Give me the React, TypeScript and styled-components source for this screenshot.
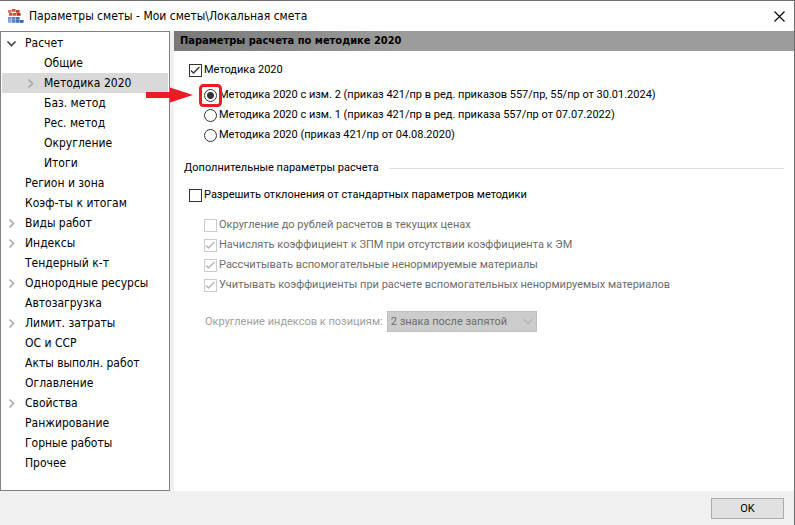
import React from "react";
import styled, { createGlobalStyle, css } from "styled-components";

const Global = createGlobalStyle`
  * { box-sizing: border-box; }
  body { margin: 0; background: #f0f0f0; }
  button, select, input { font: inherit; margin: 0; }
`;

const Dialog = styled.div`
  min-height: 100vh;
  display: flex;
  flex-direction: column;
  border-top: 1px solid #6d6d6d;
  border-right: 1px solid #6d6d6d;
  background: #f0f0f0;
  color: #000;
  font: 11px/20px Roboto, sans-serif;
  white-space: nowrap;
`;

const TitleBar = styled.header`
  display: flex;
  align-items: center;
  gap: 5px;
  height: 30px;
  padding-left: 8px;
  background: #fff;
`;

const Title = styled.h1`
  flex: 1;
  margin: 0;
  font: 12px/20px "DejaVu Sans Condensed", "DejaVu Sans", sans-serif;
`;

const CloseButton = styled.button`
  display: grid;
  place-items: center;
  width: 30px;
  height: 28px;
  padding: 0;
  border: 0;
  background: none;
`;

const Body = styled.div`
  flex: 1;
  display: flex;
  gap: 4px;
`;

const Sidebar = styled.nav`
  flex: none;
  width: 170px;
  padding: 1px;
  border: 1px solid #828282;
  background: #fff;
  font: 12px/20px "DejaVu Sans Condensed", "DejaVu Sans", sans-serif;
`;

const Tree = styled.ul`
  margin: 0;
  padding: 0;
  list-style: none;
`;

const TreeRow = styled.button<{ $level: number; $selected?: boolean }>`
  display: flex;
  align-items: center;
  width: 100%;
  height: 20px;
  padding: 0 0 0 ${(p) => (p.$level ? 23 : 4)}px;
  border: 0;
  background: ${(p) => (p.$selected ? "#d9d9d9" : "none")};
  color: inherit;
  text-align: left;
`;

const Marker = styled.span`
  display: flex;
  flex: none;
  width: 19px;
`;

const Panel = styled.main`
  flex: 1;
  min-width: 0;
  background: #fff;
`;

const PanelTitle = styled.h2`
  margin: 0;
  padding-left: 6px;
  background: linear-gradient(to right, #787878, #9c9c9c 36%);
  font: bold 11px/20px "DejaVu Sans Condensed", "DejaVu Sans", sans-serif;
`;

const Settings = styled.div`
  padding: 9px 10px 0;
`;

const Options = styled.div<{ $spaced?: boolean }>`
  padding: ${(p) => (p.$spaced ? "10px" : "5px")} 0 0 15px;
`;

const Group = styled.div<{ $offset?: boolean }>`
  padding: ${(p) => (p.$offset ? "7px" : "0")} 0 0 5px;
`;

const Option = styled.label<{ $disabled?: boolean }>`
  display: flex;
  align-items: center;
  gap: 2px;
  height: 20px;
  color: ${(p) => (p.$disabled ? "#6d6d6d" : "#000")};
`;

const mark = css`
  flex: none;
  appearance: none;
  width: 13px;
  height: 13px;
  border: 1px solid #333;
  background: #fff;
  &:disabled { border-color: #ccc; }
`;

const CheckInput = styled.input.attrs({ type: "checkbox" })`
  ${mark}
  grid-area: 1 / 1;
  & + svg { visibility: hidden; }
  &:checked + svg { visibility: visible; }
`;

const CheckBox = styled.span<{ $disabled?: boolean }>`
  display: grid;
  place-items: center;
  color: ${(p) => (p.$disabled ? "#b4b4b4" : "#333")};
  svg { grid-area: 1 / 1; pointer-events: none; }
`;

const RadioInput = styled.input.attrs({ type: "radio" })`
  ${mark}
  border-radius: 50%;
  &:checked { background: radial-gradient(circle, #333 3px, #fff 4px); }
`;

const RadioSlot = styled.span`
  position: relative;
  display: flex;
`;

const Callout = styled.svg`
  position: absolute;
  top: -6px;
  left: -59px;
  pointer-events: none;
`;

const Section = styled.div`
  display: flex;
  align-items: center;
  gap: 10px;
  margin-top: 13px;
  &::after {
    content: "";
    flex: 1;
    height: 1px;
    background: #dcdfe3;
  }
`;

const SelectRow = styled.div`
  display: flex;
  align-items: center;
  gap: 4px;
  margin-top: 16px;
  padding-left: 1px;
  color: #a0a0a0;
`;

const SelectBox = styled.span`
  display: grid;
  align-items: center;
  width: 150px;
  svg { grid-area: 1 / 1; justify-self: end; margin-right: 4px; pointer-events: none; }
`;

const Select = styled.select`
  grid-area: 1 / 1;
  appearance: none;
  height: 21px;
  padding: 0 20px 0 3px;
  border: 1px solid #bfbfbf;
  border-radius: 0;
  background: #ccc;
  color: #6d6d6d;
  &:disabled { opacity: 1; }
`;

const Footer = styled.footer`
  display: flex;
  justify-content: flex-end;
  padding: 7px 10px 6px;
`;

const OkButton = styled.button`
  width: 73px;
  height: 21px;
  padding: 0;
  border: 1px solid #adadad;
  background: #e1e1e1;
  color: #000;
`;

type Item = { label: string; level?: number; state?: "open" | "closed"; selected?: boolean };

const items: Item[] = [
  { label: "Расчет", state: "open" },
  { label: "Общие", level: 1 },
  { label: "Методика 2020", level: 1, state: "closed", selected: true },
  { label: "Баз. метод", level: 1 },
  { label: "Рес. метод", level: 1 },
  { label: "Округление", level: 1 },
  { label: "Итоги", level: 1 },
  { label: "Регион и зона" },
  { label: "Коэф-ты к итогам" },
  { label: "Виды работ", state: "closed" },
  { label: "Индексы", state: "closed" },
  { label: "Тендерный к-т" },
  { label: "Однородные ресурсы", state: "closed" },
  { label: "Автозагрузка" },
  { label: "Лимит. затраты", state: "closed" },
  { label: "ОС и ССР" },
  { label: "Акты выполн. работ" },
  { label: "Оглавление" },
  { label: "Свойства", state: "closed" },
  { label: "Ранжирование" },
  { label: "Горные работы" },
  { label: "Прочее" },
];

const methods = [
  "Методика 2020 с изм. 2 (приказ 421/пр в ред. приказов 557/пр, 55/пр от 30.01.2024)",
  "Методика 2020 с изм. 1 (приказ 421/пр в ред. приказа 557/пр от 07.07.2022)",
  "Методика 2020 (приказ 421/пр от 04.08.2020)",
];

const extras = [
  { label: "Округление до рублей расчетов в текущих ценах", checked: false },
  { label: "Начислять коэффициент к ЗПМ при отсутствии коэффициента к ЭМ", checked: true },
  { label: "Рассчитывать вспомогательные ненормируемые материалы", checked: true },
  { label: "Учитывать коэффициенты при расчете вспомогательных ненормируемых материалов", checked: true },
];

const Chevron = ({ open }: { open: boolean }) => (
  <svg width="11" height="11" viewBox="0 0 11 11" fill="none" strokeWidth="1.6" stroke={open ? "#404040" : "#a6a6a6"} aria-hidden="true">
    <path d={open ? "M1.5 3.5 5.5 7.5 9.5 3.5" : "M3.5 1.5 7.5 5.5 3.5 9.5"} />
  </svg>
);

const cells: [number, number, string][] = [
  [4, 0, "#d9523c"], [0, 1, "#e0705c"], [8, 1, "#c8402c"],
  [1, 4, "#d9523c"], [5, 4, "#d9523c"], [9, 4, "#b83222"],
  [0, 8, "#7394cf"], [4, 8, "#5c80c4"], [8, 8, "#486fb8"],
  [0, 11, "#84a3d8"], [4, 11, "#5c80c4"], [8, 11, "#486fb8"], [12, 11, "#3a60aa"],
];

const AppIcon = () => (
  <svg width="16" height="14" viewBox="0 0 16 14" aria-hidden="true">
    {cells.map(([x, y, fill]) => <rect key={`${x}-${y}`} x={x} y={y} width="3.6" height="2.800" fill={fill} />)}
  </svg>
);

function Check({ label, checked, disabled }: { label: string; checked: boolean; disabled?: boolean }) {
  return (
    <Option $disabled={disabled}>
      <CheckBox $disabled={disabled}>
        <CheckInput defaultChecked={checked} disabled={disabled} />
        <svg width="13" height="13" viewBox="0 0 13 13" fill="none" stroke="currentColor" strokeWidth="1.3" aria-hidden="true">
          <path d="M2 6.5 4.500 9 10.5 3" />
        </svg>
      </CheckBox>
      {label}
    </Option>
  );
}

const ArrowCallout = () => (
  <Callout width="78" height="25" viewBox="0 0 78 25" aria-hidden="true">
    <path d="M1 9H25V4.500L48 12 25 19.500V15H1Z" fill="#ed1c24" />
    <rect x="55.500" y="2.500" width="20" height="20" rx="3" fill="none" stroke="#ed1c24" strokeWidth="3" />
  </Callout>
);

export default function App() {
  return (
    <>
      <Global />
      <Dialog role="dialog" aria-labelledby="title">
        <TitleBar>
          <AppIcon />
          <Title id="title">Параметры сметы - Мои сметы\Локальная смета</Title>
          <CloseButton aria-label="Закрыть">
            <svg width="11" height="11" viewBox="0 0 11 11" stroke="#000" strokeWidth="1.1" aria-hidden="true">
              <path d="M.5.5l10 10M10.500.5l-10 10" />
            </svg>
          </CloseButton>
        </TitleBar>
        <Body>
          <Sidebar>
            <Tree>
              {items.map((item) => (
                <li key={item.label}>
                  <TreeRow $level={item.level ?? 0} $selected={item.selected}>
                    <Marker>{item.state && <Chevron open={item.state === "open"} />}</Marker>
                    {item.label}
                  </TreeRow>
                </li>
              ))}
            </Tree>
          </Sidebar>
          <Panel>
            <PanelTitle>Параметры расчета по методике 2020</PanelTitle>
            <Settings>
              <Group>
                <Check label="Методика 2020" checked />
                <Options>
                  {methods.map((label, i) => (
                    <Option key={label}>
                      <RadioSlot>
                        <RadioInput name="method" defaultChecked={i === 0} />
                        {i === 0 && <ArrowCallout />}
                      </RadioSlot>
                      {label}
                    </Option>
                  ))}
                </Options>
              </Group>
              <Section>Дополнительные параметры расчета</Section>
              <Group $offset>
                <Check label="Разрешить отклонения от стандартных параметров методики" checked={false} />
                <Options $spaced>
                  {extras.map((e) => <Check key={e.label} {...e} disabled />)}
                  <SelectRow>
                    <label htmlFor="rounding">Округление индексов к позициям:</label>
                    <SelectBox>
                      <Select id="rounding" disabled>
                        <option>2 знака после запятой</option>
                      </Select>
                      <svg width="10" height="6" viewBox="0 0 10 6" fill="none" stroke="#a0a0a0" aria-hidden="true">
                        <path d="M1 .5 5 4.500 9 .5" />
                      </svg>
                    </SelectBox>
                  </SelectRow>
                </Options>
              </Group>
            </Settings>
          </Panel>
        </Body>
        <Footer>
          <OkButton>OK</OkButton>
        </Footer>
      </Dialog>
    </>
  );
}
